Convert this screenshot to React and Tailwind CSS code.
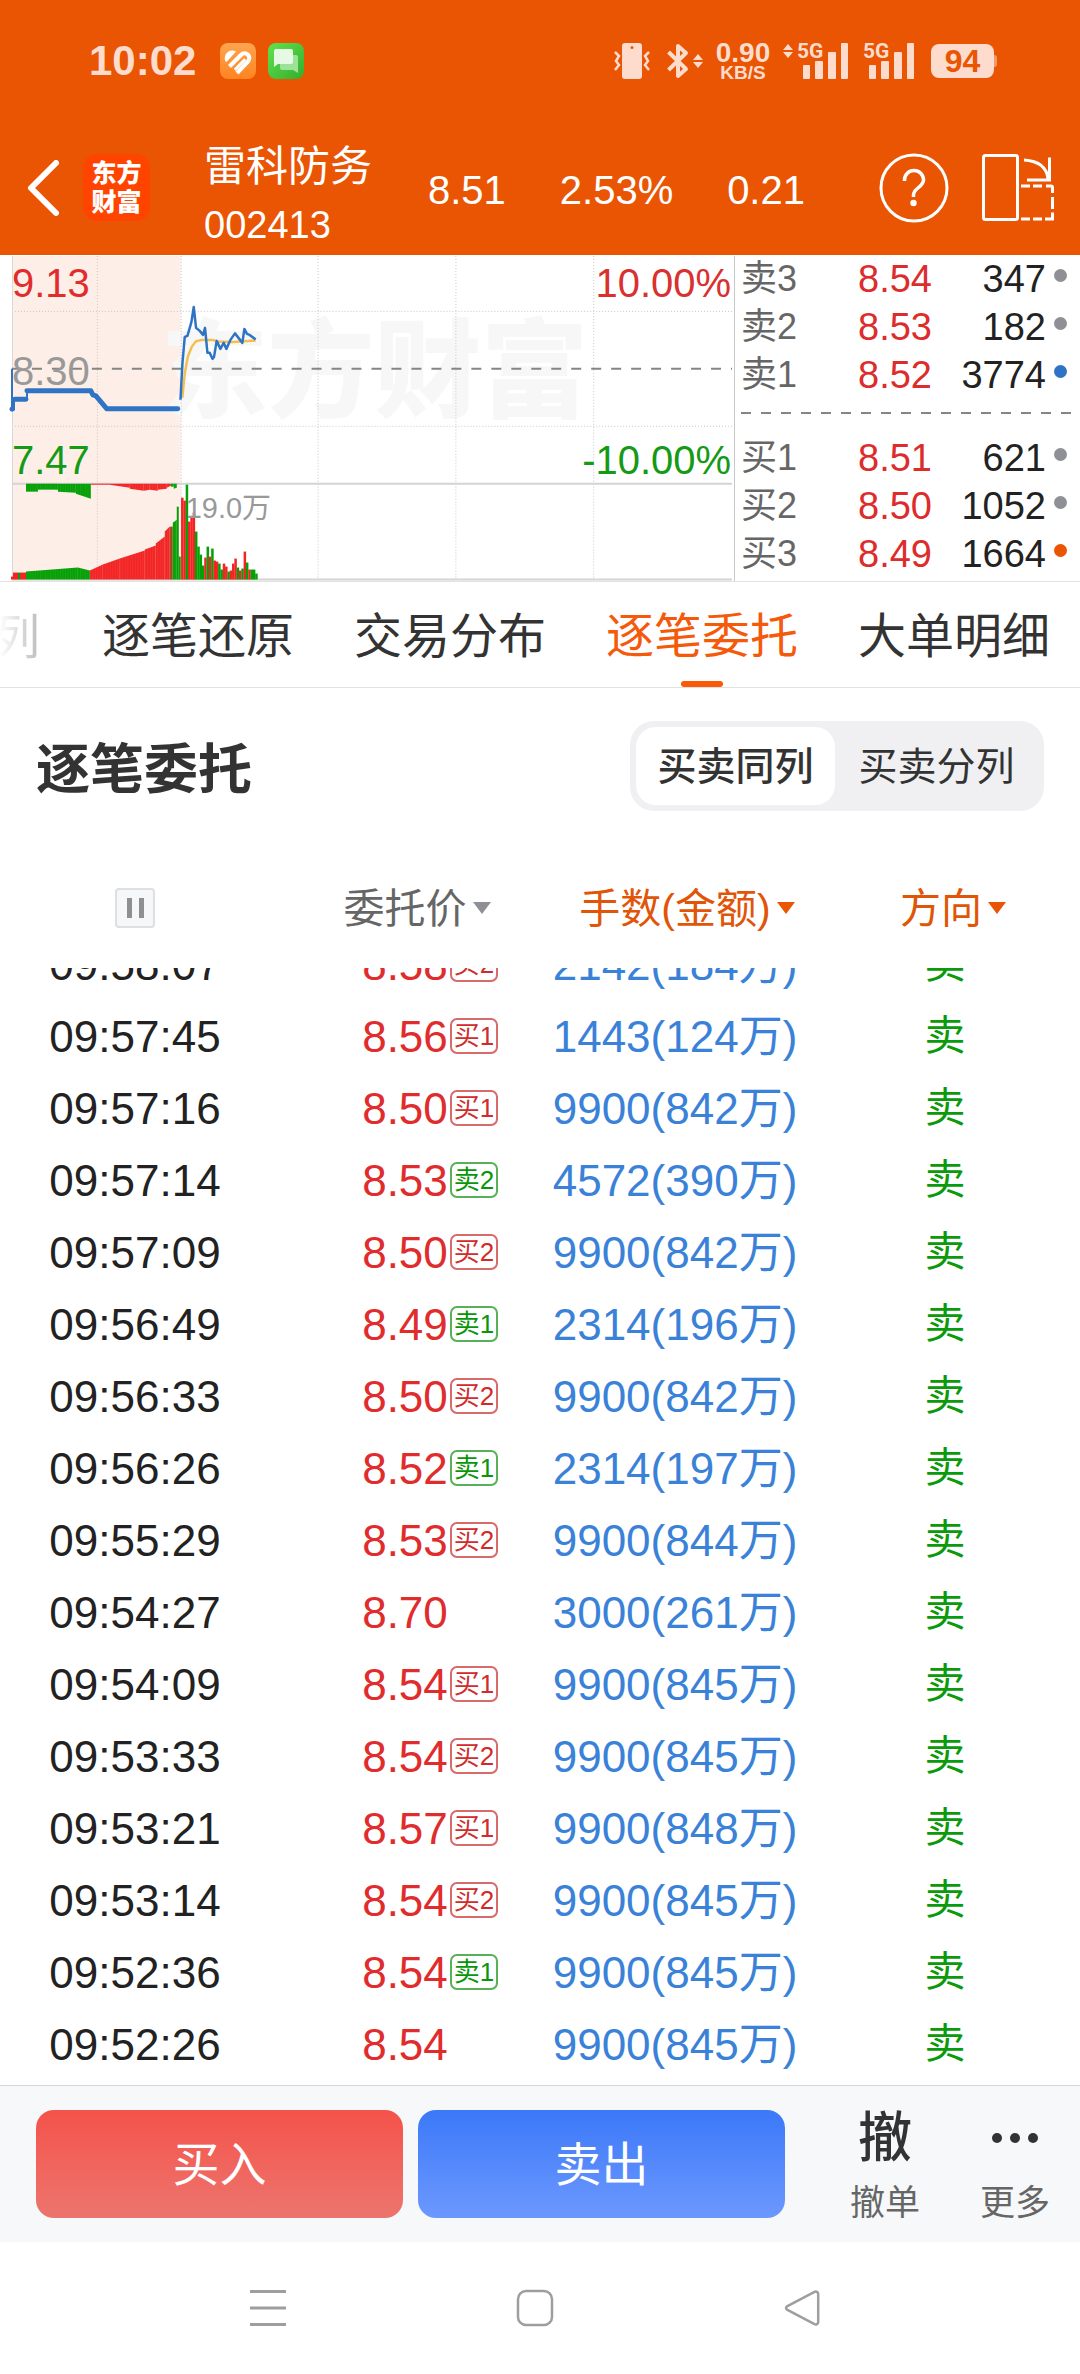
import { useState } from "react";

const orders = [
  { time: "09:58:07", price: "8.58", tag: "买2", amount: "2142(184万)" },
  { time: "09:57:45", price: "8.56", tag: "买1", amount: "1443(124万)" },
  { time: "09:57:16", price: "8.50", tag: "买1", amount: "9900(842万)" },
  { time: "09:57:14", price: "8.53", tag: "卖2", amount: "4572(390万)" },
  { time: "09:57:09", price: "8.50", tag: "买2", amount: "9900(842万)" },
  { time: "09:56:49", price: "8.49", tag: "卖1", amount: "2314(196万)" },
  { time: "09:56:33", price: "8.50", tag: "买2", amount: "9900(842万)" },
  { time: "09:56:26", price: "8.52", tag: "卖1", amount: "2314(197万)" },
  { time: "09:55:29", price: "8.53", tag: "买2", amount: "9900(844万)" },
  { time: "09:54:27", price: "8.70", tag: null, amount: "3000(261万)" },
  { time: "09:54:09", price: "8.54", tag: "买1", amount: "9900(845万)" },
  { time: "09:53:33", price: "8.54", tag: "买2", amount: "9900(845万)" },
  { time: "09:53:21", price: "8.57", tag: "买1", amount: "9900(848万)" },
  { time: "09:53:14", price: "8.54", tag: "买2", amount: "9900(845万)" },
  { time: "09:52:36", price: "8.54", tag: "卖1", amount: "9900(845万)" },
  { time: "09:52:26", price: "8.54", tag: null, amount: "9900(845万)" },
];

const asks = [
  { label: "卖3", price: "8.54", volume: 347, dot: "bg-[#8f8f96]" },
  { label: "卖2", price: "8.53", volume: 182, dot: "bg-[#8f8f96]" },
  { label: "卖1", price: "8.52", volume: 3774, dot: "bg-[#2f74c4]" },
];

const bids = [
  { label: "买1", price: "8.51", volume: 621, dot: "bg-[#8f8f96]" },
  { label: "买2", price: "8.50", volume: 1052, dot: "bg-[#8f8f96]" },
  { label: "买3", price: "8.49", volume: 1664, dot: "bg-[#ea5504]" },
];

const tabs = ["逐笔还原", "交易分布", "逐笔委托", "大单明细"];

const RED = "#f32424";
const GREEN = "#05a005";

// opening auction volume: [from x, to x, height at from, height at to, colour]
const auctionVolume = [
  [11, 13, 3, 3, RED],
  [13, 18, 7, 7, RED],
  [18, 20, 7, 7, GREEN],
  [20, 26, 7, 7, RED],
  [26, 78, 8, 12, GREEN],
  [78, 90, 12, 9, GREEN],
  [90, 103, 9, 15, RED],
  [103, 120, 15, 21, RED],
  [120, 145, 21, 29, RED],
  [145, 156, 30, 34, RED],
  [156, 165, 36, 43, RED],
  [165, 170, 48, 53, RED],
  [170, 173, 53, 53, "#a04818"],
  [173, 177, 57, 60, GREEN],
  [177, 179, 73, 73, GREEN],
  [179, 181, 23, 23, GREEN],
];

// unmatched volume, hanging from the divider
const auctionUnmatched = [
  [26, 38, 8, 8, GREEN],
  [38, 58, 6, 6, GREEN],
  [58, 76, 8, 9, GREEN],
  [76, 91, 10, 15, GREEN],
  [91, 110, 1, 1, RED],
  [110, 130, 1, 4, RED],
  [130, 144, 5, 7, RED],
  [144, 150, 7, 6, RED],
  [150, 158, 6, 7, RED],
  [158, 167, 6, 5, RED],
  [167, 171, 4, 2, RED],
  [171, 174, 3, 3, GREEN],
  [174, 177, 5, 4, GREEN],
];

// one bar a minute since the open
const minuteVolume = [
  [82, "r"], [79, "r"], [95, "g"], [58, "r"], [62, "r"], [67, "r"], [48, "g"],
  [33, "g"], [25, "g"], [14, "g"], [22, "r"], [33, "g"], [23, "r"], [31, "g"],
  [19, "r"], [18, "r"], [16, "g"], [10, "g"], [16, "r"], [13, "r"], [8, "g"],
  [9, "r"], [16, "r"], [21, "r"], [12, "g"], [9, "r"], [11, "g"], [28, "r"],
  [17, "g"], [10, "r"], [10, "g"], [10, "g"], [6, "g"],
];

const UpDown = ({ className }) => (
  <svg viewBox="0 0 10 14" className={className} fill="currentColor">
    <path d="M5 0 10 6H0zM5 14 0 8h10z" />
  </svg>
);

const Signal = () => (
  <div className="relative h-9 w-[52px]">
    <span className="absolute -top-[2px] left-0 font-['Roboto'] text-[21px] font-bold leading-[20px]">
      5G
    </span>
    <svg viewBox="0 0 46 36" className="absolute bottom-0 right-0 h-9 w-[46px]" fill="currentColor">
      <rect x="0" y="22" width="7" height="14" rx="1" />
      <rect x="12" y="18" width="8" height="18" rx="1" />
      <rect x="25" y="9" width="8" height="27" rx="1" />
      <rect x="38" y="0" width="7" height="36" rx="1" />
    </svg>
  </div>
);

const StatusBar = () => (
  <div className="flex h-[122px] items-center justify-between pl-[89px] pr-[83px] text-[#fddccd]">
    <div className="flex items-center gap-3">
      <span className="mr-3 text-[42px] font-bold leading-none">10:02</span>
      <svg viewBox="0 0 36 36" className="size-9">
        <defs>
          <linearGradient id="health" x2="0" y2="1">
            <stop stopColor="#ffa550" />
            <stop offset="1" stopColor="#ff8420" />
          </linearGradient>
        </defs>
        <rect width="36" height="36" rx="8" fill="url(#health)" />
        <path d="M5.500 18.500C2.500 12 9 4.500 16 8.500L6.500 19z" fill="#fff" />
        <g fill="none" stroke="#fff" strokeWidth="4.200">
          <path d="M9.500 23.500 21 12c4.500-4.500 11 1 7 6.500L17 30" />
          <path d="M14.500 26.500 25 16" strokeWidth="3.500" />
          <path d="M12.500 26 23.500 14.800" strokeWidth="1.500" stroke="#ff942f" />
        </g>
      </svg>
      <svg viewBox="0 0 36 36" className="size-9">
        <defs>
          <linearGradient id="chat" x2="1" y2="1">
            <stop stopColor="#62e24e" />
            <stop offset="1" stopColor="#35ad2c" />
          </linearGradient>
        </defs>
        <rect width="36" height="36" rx="8" fill="url(#chat)" />
        <path d="M14 12h14a2 2 0 0 1 2 2v16l-5-3H14a2 2 0 0 1-2-2V14z" fill="#9be29a" />
        <path d="M8 6h15a2 2 0 0 1 2 2v11a2 2 0 0 1-2 2H10l-4 3V8a2 2 0 0 1 2-2z" fill="#e6f9e4" />
      </svg>
    </div>

    <div className="flex items-center">
      <svg viewBox="0 0 36 36" className="size-9" fill="none" stroke="currentColor" strokeWidth="2.500">
        <path
          fillRule="evenodd"
          d="M11 0h14a3 3 0 0 1 3 3v30a3 3 0 0 1-3 3H11a3 3 0 0 1-3-3V3a3 3 0 0 1 3-3zm7 3a1.500 1.500 0 1 0 0 3 1.500 1.500 0 0 0 0-3z"
          fill="currentColor"
          stroke="none"
        />
        <path d="M1 9 5 13 2 18 5 22 1 27M35 9 31 13 34 18 31 22 35 27" />
      </svg>
      <svg viewBox="0 0 22 36" className="ml-[17px] h-9 w-[22px]" fill="none" stroke="currentColor" strokeWidth="4">
        <path d="M1.500 9 19 26 11 33V3L19 10 1.500 27" strokeLinejoin="round" />
      </svg>
      <UpDown className="ml-1 h-[14px] w-[10px]" />
      <div className="ml-2 flex w-[64px] flex-col items-center font-bold">
        <span className="text-[28px] leading-6">0.90</span>
        <span className="text-[19px] leading-4">KB/S</span>
      </div>
      <UpDown className="mb-5 ml-2 h-[14px] w-[10px]" />
      <div className="ml-1 flex gap-[14px]">
        <Signal />
        <Signal />
      </div>
      <div className="ml-4 flex items-center">
        <span className="flex h-[34px] w-[63px] items-center justify-center rounded-lg bg-[#fddccd] text-[32px] font-bold leading-none text-[#ea5504]">
          94
        </span>
        <span className="h-3 w-[3px] rounded-r bg-[#f39a6c]" />
      </div>
    </div>
  </div>
);

const StockHeader = () => (
  <div className="flex h-[133px] items-center pb-[2px] pl-[27px] pr-[25px] text-[40px] leading-none text-white">
    <button aria-label="返回">
      <svg viewBox="0 0 32 56" className="h-14 w-8" fill="none" stroke="currentColor" strokeWidth="6">
        <path d="M29 3 4 28 29 53" strokeLinecap="round" strokeLinejoin="round" />
      </svg>
    </button>
    <div className="ml-6 flex size-[67px] flex-col items-center justify-center rounded-[14px] bg-[#ff4400] text-[25px] font-black leading-[29px]">
      <span>东方</span>
      <span>财富</span>
    </div>
    <h1 className="ml-[54px] flex w-[168px] flex-col pt-4 text-[42px] font-normal leading-[58px]">
      <span>雷科防务</span>
      <span className="text-[38px]">002413</span>
    </h1>
    <div className="ml-14 flex flex-1 justify-between pt-1">
      <span>8.51</span>
      <span>2.53%</span>
      <span>0.21</span>
    </div>
    <button aria-label="帮助" className="ml-[74px]">
      <svg viewBox="0 0 70 70" className="size-[70px]" fill="none" stroke="currentColor" strokeWidth="3">
        <circle cx="35" cy="35" r="33" />
        <path d="M25.500 28v-1a9.500 9.500 0 0 1 19 0c0 7-10 8-10 15v2" strokeWidth="3.500" />
        <circle cx="34.500" cy="50" r="3.200" fill="currentColor" stroke="none" />
      </svg>
    </button>
    <button aria-label="横屏" className="ml-8">
      <svg viewBox="0 0 74 70" className="h-[70px] w-[74px]" fill="none" stroke="currentColor" strokeWidth="3">
        <rect x="2.500" y="2.500" width="34" height="64" rx="2" />
        <path d="M43 7c15 1 23 8 24 19M68.500 4.500V27H46" />
        <path d="M40 33h9M52 33h9M65 33h5a1.500 1.500 0 0 1 1.500 1.500V40M71.500 44v12M71.500 59.500V66H64M61 66h-9M49 66h-9" />
      </svg>
    </button>
  </div>
);

const Segments = ({ data, base, up }) =>
  data.map(([x1, x2, h1, h2, fill]) => {
    const dir = up ? -1 : 1;
    return (
      <polygon
        key={x1}
        fill={fill}
        points={`${x1},${base} ${x1},${base + dir * h1} ${x2},${base + dir * h2} ${x2},${base}`}
      />
    );
  });

const PriceChart = () => (
  <svg
    viewBox="0 0 735 325"
    className="min-w-0 flex-1 border-r border-[#c8c8c8]"
    role="img"
    aria-label="分时走势"
  >
    <rect x="12" width="169" height="325" fill="#fdeee7" />
    <text x="161" y="153" fontSize="107" fontWeight="900" fill="#f7f7f7">
      东方财富
    </text>

    {/* Grid */}
    <g stroke="#c8c8c8" strokeDasharray="1 2" fill="none">
      <path d="M12 55.500H733M12 170.500H733M97.500 0V324M181.500 0V324M318.500 0V324M456.500 0V324M594.500 0V324" />
    </g>
    <path d="M12.500 0V325" stroke="#d8d8d8" />
    <path d="M12 228H733M12 324H733" stroke="#d4d4d4" strokeWidth="2" />
    <path d="M12 113H733" stroke="#858585" strokeWidth="2" strokeDasharray="10 10" />

    {/* Volume */}
    <Segments data={auctionVolume} base={324} up />
    <Segments data={auctionUnmatched} base={228} />
    <g fill="none" stroke="#fff" strokeOpacity=".12" strokeWidth=".6">
      {Array.from({ length: 60 }, (_, i) => (
        <path key={i} d={`M${28 + i * 2.5} 229V324`} />
      ))}
    </g>
    {minuteVolume.map(([h, side], i) => (
      <rect
        key={i}
        x={181.3 + i * 2.32}
        y={324 - h}
        width="2.5"
        height={h}
        fill={side === "r" ? RED : GREEN}
      />
    ))}

    {/* Axis labels */}
    <g fontSize="40">
      <text x="12" y="41" fill="#e02c2c">9.13</text>
      <text x="12" y="129" fill="#999">8.30</text>
      <text x="12" y="218" fill="#149a14">7.47</text>
      <g textAnchor="end">
        <text x="732" y="41" fill="#d93030">10.00%</text>
        <text x="732" y="218" fill="#149a14">-10.00%</text>
      </g>
      <text x="186" y="262" fontSize="29" fill="#999">19.0万</text>
    </g>

    {/* Price and average lines */}
    <g fill="none" strokeLinejoin="round">
      <path
        d="M182.500 142 185 118 188 101 192 91 196 85.500 202 84 213 84 217 85.500 233 86 256 84.500"
        stroke="#f3bf50"
        strokeWidth="2.500"
      />
      <path
        d="M12 113V153M12 154H14V142.500L27 143.500V135H91L92 139 96 140 107 153H179"
        stroke="#2f74c4"
        strokeWidth="2"
      />
      <path
        d="M15 143.500H26M27 135H91L93 139 96 140 107 153H178"
        stroke="#2f74c4"
        strokeWidth="5"
        strokeLinecap="round"
      />
      <circle cx="12" cy="153.500" r="2.500" fill="#2f74c4" />
      <path
        d="M180.700 144 182.700 107 185 81 187.700 80 191.700 66 194 51 196.300 72 200 75 203.300 79 205.300 72 207.700 97 210 97 212.700 103 214.300 101 217 85 220.700 93 224 87 226.700 93 230.700 84 235.300 77.500 242.700 87 244.700 73 247.300 78 250 79 256 83.500"
        stroke="#2f74c4"
        strokeWidth="2.500"
      />
    </g>
  </svg>
);

const BookRow = ({ label, price, volume, dot }) => (
  <div className="flex h-11 items-center text-[38px] leading-none text-[#222]">
    <span className="text-[36px] text-[#666]">{label}</span>
    <span className="flex-1 text-right text-[#dc2c2c]">{price}</span>
    <span className="w-[114px] text-right">{volume}</span>
    <span className={`mb-2 ml-2 size-[13px] rounded-full ${dot}`} />
  </div>
);

const OrderBook = () => (
  <div className="flex w-[345px] flex-none flex-col gap-1 pl-[6px] pr-[13px] pt-px">
    {asks.map((row) => (
      <BookRow key={row.label} {...row} />
    ))}
    <div className="-mr-[6px] mb-[18px] mt-[11px] h-[2px] bg-[repeating-linear-gradient(90deg,#858585_0_10px,transparent_10px_20px)]" />
    {bids.map((row) => (
      <BookRow key={row.label} {...row} />
    ))}
  </div>
);

const Tabs = () => {
  const [active, setActive] = useState("逐笔委托");
  return (
    <nav className="flex h-[107px] gap-[60px] overflow-hidden border-y border-[#e2e2e2] text-[48px] text-[#333]">
      <span className="-ml-[8px] mr-[2px] flex-none bg-gradient-to-r from-white from-15% to-[#bbb] bg-clip-text pt-1 leading-[104px] text-transparent">
        列
      </span>
      {tabs.map((tab) => (
        <button
          key={tab}
          onClick={() => setActive(tab)}
          className={`relative flex-none whitespace-nowrap pt-[6px] ${tab === active ? "text-[#f5590a]" : ""}`}
        >
          {tab}
          {tab === active && (
            <span className="absolute bottom-0 left-1/2 h-[6px] w-[42px] -translate-x-1/2 rounded-full bg-[#fa5a08]" />
          )}
        </button>
      ))}
    </nav>
  );
};

const SortButton = ({ text, active }) => (
  <button className={`relative pt-1 ${active ? "text-[#e05508]" : "text-[#666]"}`}>
    {text}
    <svg
      viewBox="0 0 18 12"
      className={`absolute left-full top-1/2 ml-[6px] h-3 w-[18px] -translate-y-1/2 ${
        active ? "text-[#ea5504]" : "text-[#8f8f96]"
      }`}
      fill="currentColor"
    >
      <path d="M0 0h18L9 12z" />
    </svg>
  </button>
);

const OrderTable = () => (
  <table className="mt-[53px] flex flex-col">
    <thead className="block">
      <tr className="grid h-[104px] grid-cols-4 items-center pb-4 text-[41px]">
        <th className="flex justify-center">
          <button
            aria-label="暂停"
            className="flex size-10 items-center justify-center gap-[7px] rounded border-2 border-[#dddfe2] bg-[#f6f7f9]"
          >
            <span className="h-5 w-[5px] bg-[#8f8f8f]" />
            <span className="h-5 w-[5px] bg-[#8f8f8f]" />
          </button>
        </th>
        <th className="font-normal">
          <SortButton text="委托价" />
        </th>
        <th className="font-normal">
          <SortButton text="手数(金额)" active />
        </th>
        <th className="pr-2 font-normal">
          <SortButton text="方向" active />
        </th>
      </tr>
    </thead>
    <tbody className="block overflow-hidden pb-[5px]">
      {orders.map(({ time, price, tag, amount }) => (
        <tr
          key={time}
          className="grid h-[72px] grid-cols-4 items-center pt-[2px] text-center text-[44px] leading-none first:-mt-10"
        >
          <td className="text-[#222]">{time}</td>
          <td className="text-[#e02c2c]">
            <span className="relative">
              {price}
              {tag && (
                <span
                  className={`absolute left-full top-1/2 ml-[2px] h-9 -translate-y-1/2 whitespace-nowrap rounded-[7px] border-2 px-[2px] text-[26px] leading-8 ${
                    tag[0] === "买"
                      ? "border-[#d86a6a] text-[#d02c2c]"
                      : "border-[#58b058] text-[#0a960a]"
                  }`}
                >
                  {tag}
                </span>
              )}
            </span>
          </td>
          <td className="text-[#3a82d8]">{amount}</td>
          <td className="text-[41px] text-[#0a9a0a]">卖</td>
        </tr>
      ))}
    </tbody>
  </table>
);

const ActionBar = () => (
  <div className="flex h-[157px] items-center border-t border-[#d5d7da] bg-[#f6f8fa] pl-9">
    <button className="h-[108px] flex-1 rounded-[18px] bg-gradient-to-b from-[#f4524a] to-[#ec746e] pt-1 text-[47px] text-white">
      买入
    </button>
    <button className="ml-[15px] h-[108px] flex-1 rounded-[18px] bg-gradient-to-b from-[#3b78f8] to-[#6c98fe] pt-1 text-[47px] text-white">
      卖出
    </button>
    <button className="ml-[35px] flex w-[130px] flex-col items-center pt-2 text-[35px] leading-[60px] text-[#666]">
      <span className="text-[54px] font-medium leading-[70px] text-[#333]">撤</span>
      撤单
    </button>
    <button className="flex w-[130px] flex-col items-center pt-2 text-[35px] leading-[60px] text-[#666]">
      <span className="flex h-[70px] items-center gap-2">
        <span className="size-[10px] rounded-full bg-[#333]" />
        <span className="size-[10px] rounded-full bg-[#333]" />
        <span className="size-[10px] rounded-full bg-[#333]" />
      </span>
      更多
    </button>
  </div>
);

const SystemNav = () => (
  <div className="grid h-[132px] grid-cols-3 place-items-center pl-[134px] pr-[144px] text-[#9e9e9e]">
    <button aria-label="最近任务">
      <svg viewBox="0 0 36 38" className="h-[38px] w-9" stroke="currentColor" strokeWidth="3">
        <path d="M0 2.500h36M0 19h36M0 35.500h36" />
      </svg>
    </button>
    <button aria-label="主屏幕">
      <svg viewBox="0 0 38 38" className="size-[38px]" fill="none" stroke="currentColor" strokeWidth="2.500">
        <rect x="2" y="2" width="34" height="34" rx="8" />
      </svg>
    </button>
    <button aria-label="后退">
      <svg viewBox="0 0 36 38" className="h-[38px] w-9" fill="none" stroke="currentColor" strokeWidth="2.500">
        <path d="M30.500 2.800 3 17.300a2 2 0 0 0 0 3.400l27.500 14.500a2.500 2.500 0 0 0 3.700-2.200V5a2.500 2.500 0 0 0-3.700-2.200z" />
      </svg>
    </button>
  </div>
);

export default function App() {
  const [split, setSplit] = useState(false);

  return (
    <div className="bg-white font-['Liberation_Sans','Noto_Sans_CJK_SC',sans-serif]">
      <header className="bg-[#ea5504]">
        <StatusBar />
        <StockHeader />
      </header>

      <section className="flex items-start pt-px">
        <PriceChart />
        <OrderBook />
      </section>

      <Tabs />

      <main>
        {/* Title and layout switch */}
        <div className="flex items-center justify-between pl-9 pr-9 pt-[33px]">
          <h2 className="pt-2 text-[54px] font-bold leading-[82px] text-[#333]">逐笔委托</h2>
          <div className="flex h-[90px] rounded-[24px] bg-[#f0f0f2] p-[6px] text-[39px] text-[#333]">
            <button
              onClick={() => setSplit(false)}
              className={`w-[199px] rounded-[20px] pt-1 ${split ? "" : "bg-white font-medium"}`}
            >
              买卖同列
            </button>
            <button
              onClick={() => setSplit(true)}
              className={`w-[203px] rounded-[20px] pt-1 ${split ? "bg-white font-medium" : ""}`}
            >
              买卖分列
            </button>
          </div>
        </div>

        <OrderTable />
      </main>

      <footer>
        <ActionBar />
        <SystemNav />
      </footer>
    </div>
  );
}
